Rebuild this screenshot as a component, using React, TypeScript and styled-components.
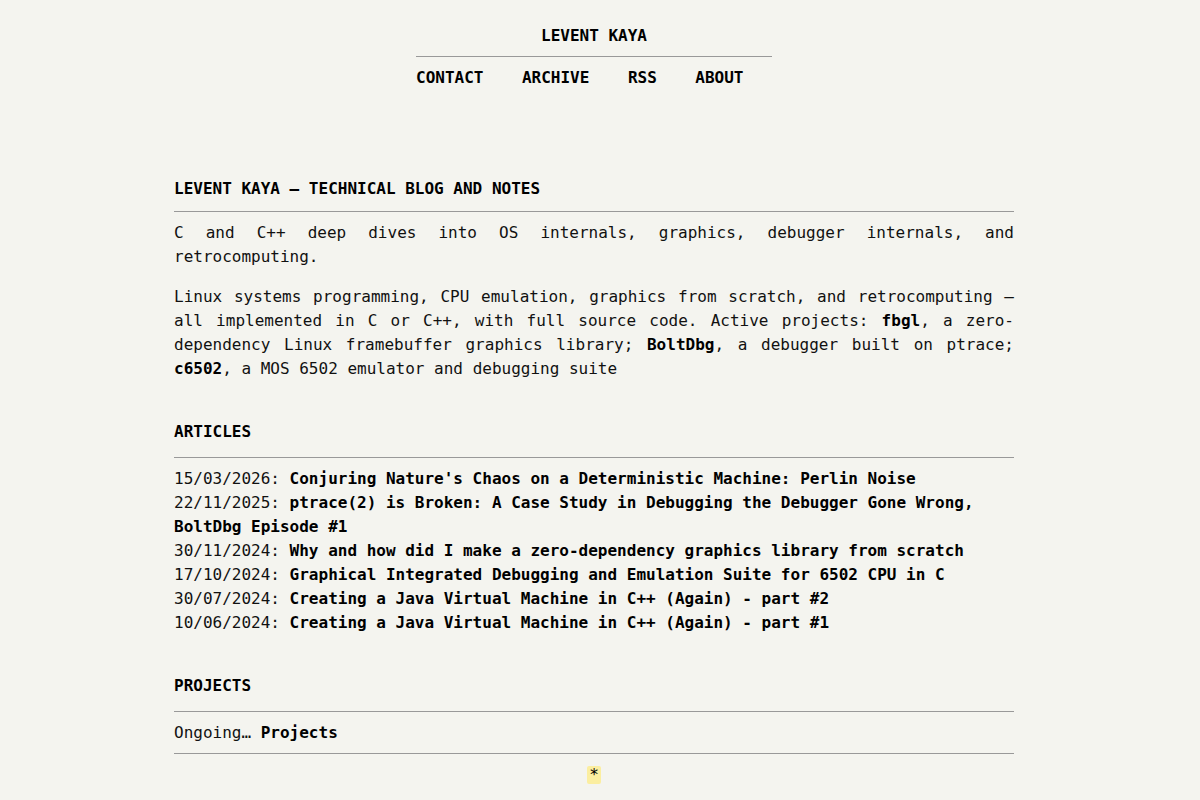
import styled, { createGlobalStyle } from "styled-components";

const GlobalStyle = createGlobalStyle`
  html, body {
    margin: 0;
    padding: 0;
    background: #f4f4ef;
  }
  body {
    font-family: "DejaVu Sans Mono", "Liberation Mono", monospace;
    font-size: 16px;
    line-height: 24px;
    color: #111;
  }
`;

const Page = styled.div`
  width: 1188px;
  padding-top: 24px;
`;

const Header = styled.header`
  width: 356px;
  margin: 0 auto;
`;

const SiteTitle = styled.div`
  text-align: center;
  font-weight: 700;
  color: #000;
  padding-bottom: 8px;
  border-bottom: 1px solid #999;
`;

const Nav = styled.nav`
  display: flex;
  gap: 38.5px;
  padding-top: 9px;
`;

const NavLink = styled.a`
  font-weight: 700;
  color: #000;
  text-decoration: none;
`;

const Main = styled.main`
  width: 840px;
  margin: 87px auto 0;
`;

const Section = styled.section`
  & + & {
    margin-top: 39px;
  }
`;

const Heading = styled.h2<{ $gap: number }>`
  margin: 0 0 9px;
  font-size: 16px;
  line-height: 24px;
  font-weight: 700;
  color: #000;
  padding-bottom: ${(p) => p.$gap}px;
  border-bottom: 1px solid #999;
`;

const Para = styled.p`
  margin: 0;
  text-align: justify;

  & + & {
    margin-top: 16px;
  }

  & b {
    color: #000;
  }
`;

const ArticleList = styled.ul`
  list-style: none;
  margin: 0;
  padding: 0;
`;

const ArticleItem = styled.li`
  margin: 0;
`;

const Strong = styled.a`
  font-weight: 700;
  color: #000;
  text-decoration: none;
`;

const Ongoing = styled.div`
  padding-bottom: 8px;
  border-bottom: 1px solid #999;
`;

const Footer = styled.footer`
  text-align: center;
  padding-top: 9px;
`;

const Star = styled.span`
  display: inline-block;
  background: #fbeea0;
  line-height: 18px;
  padding: 0 2px;
  border-radius: 2px;
  color: #000;
`;

const articles = [
  ["15/03/2026", "Conjuring Nature's Chaos on a Deterministic Machine: Perlin Noise"],
  [
    "22/11/2025",
    "ptrace(2) is Broken: A Case Study in Debugging the Debugger Gone Wrong, BoltDbg Episode #1",
  ],
  ["30/11/2024", "Why and how did I make a zero-dependency graphics library from scratch"],
  ["17/10/2024", "Graphical Integrated Debugging and Emulation Suite for 6502 CPU in C"],
  ["30/07/2024", "Creating a Java Virtual Machine in C++ (Again) - part #2"],
  ["10/06/2024", "Creating a Java Virtual Machine in C++ (Again) - part #1"],
];

export default function App() {
  return (
    <Page>
      <GlobalStyle />
      <Header>
        <SiteTitle>LEVENT KAYA</SiteTitle>
        <Nav>
          <NavLink href="#">CONTACT</NavLink>
          <NavLink href="#">ARCHIVE</NavLink>
          <NavLink href="#">RSS</NavLink>
          <NavLink href="#">ABOUT</NavLink>
        </Nav>
      </Header>

      <Main>
        <Section>
          <Heading $gap={10}>LEVENT KAYA — TECHNICAL BLOG AND NOTES</Heading>
          <Para>
            C and C++ deep dives into OS internals, graphics, debugger internals, and
            retrocomputing.
          </Para>
          <Para>
            Linux systems programming, CPU emulation, graphics from scratch, and
            retrocomputing — all implemented in C or C++, with full source code. Active
            projects: <b>fbgl</b>, a zero-dependency Linux framebuffer graphics library;{" "}
            <b>BoltDbg</b>, a debugger built on ptrace; <b>c6502</b>, a MOS 6502 emulator
            and debugging suite
          </Para>
        </Section>

        <Section>
          <Heading $gap={13}>ARTICLES</Heading>
          <ArticleList>
            {articles.map(([date, title]) => (
              <ArticleItem key={title}>
                {date}: <Strong href="#">{title}</Strong>
              </ArticleItem>
            ))}
          </ArticleList>
        </Section>

        <Section>
          <Heading $gap={13}>PROJECTS</Heading>
          <Ongoing>
            Ongoing… <Strong href="#">Projects</Strong>
          </Ongoing>
        </Section>

        <Footer>
          <Star>*</Star>
        </Footer>
      </Main>
    </Page>
  );
}
